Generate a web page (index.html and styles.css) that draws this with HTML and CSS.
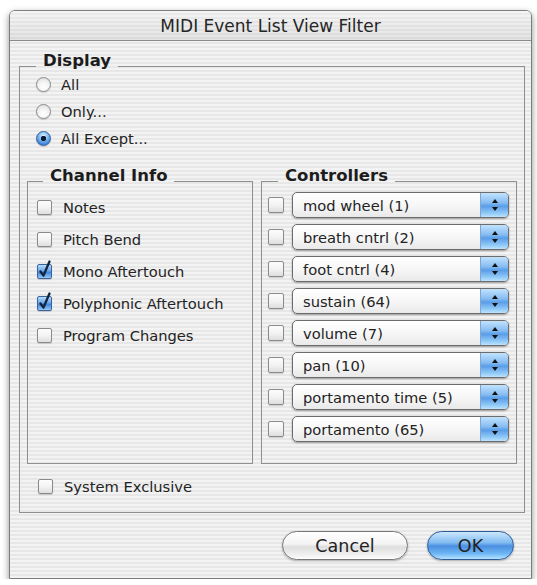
FILE: index.html
```html
<!DOCTYPE html>
<html>
<head>
<meta charset="utf-8">
<title>MIDI Event List View Filter</title>
<link rel="stylesheet" href="styles.css">
</head>
<body>
<div class="window">
  <div class="titlebar">MIDI Event List View Filter</div>
  <div class="content">
    <div class="group display">
      <div class="group-label display-label">Display</div>
      <div class="radios">
        <div class="radio-row"><span class="radio"></span><span>All</span></div>
        <div class="radio-row"><span class="radio"></span><span>Only...</span></div>
        <div class="radio-row"><span class="radio selected"></span><span>All Except...</span></div>
      </div>
      <div class="columns">
        <div class="group channel">
          <div class="group-label channel-label">Channel Info</div>
          <div class="check-list">
            <div class="check-row"><span class="check"></span><span>Notes</span></div>
            <div class="check-row"><span class="check"></span><span>Pitch Bend</span></div>
            <div class="check-row"><span class="check checked"><svg viewBox="0 0 15 15" width="15" height="15"><path d="M3.5 7.5 L6.5 11.5 L12.5 -2.5" fill="none" stroke="#14243d" stroke-width="2.3" stroke-linecap="round" stroke-linejoin="round"/></svg></span><span>Mono Aftertouch</span></div>
            <div class="check-row"><span class="check checked"><svg viewBox="0 0 15 15" width="15" height="15"><path d="M3.5 7.5 L6.5 11.5 L12.5 -2.5" fill="none" stroke="#14243d" stroke-width="2.3" stroke-linecap="round" stroke-linejoin="round"/></svg></span><span>Polyphonic Aftertouch</span></div>
            <div class="check-row"><span class="check"></span><span>Program Changes</span></div>
          </div>
        </div>
        <div class="group controllers">
          <div class="group-label ctrl-label">Controllers</div>
          <div class="ctrl-list">
            <div class="ctrl-row"><span class="check"></span><div class="popup"><span class="popup-text">mod wheel (1)</span><span class="popup-arrows"><span class="up"></span><span class="down"></span></span></div></div>
            <div class="ctrl-row"><span class="check"></span><div class="popup"><span class="popup-text">breath cntrl (2)</span><span class="popup-arrows"><span class="up"></span><span class="down"></span></span></div></div>
            <div class="ctrl-row"><span class="check"></span><div class="popup"><span class="popup-text">foot cntrl (4)</span><span class="popup-arrows"><span class="up"></span><span class="down"></span></span></div></div>
            <div class="ctrl-row"><span class="check"></span><div class="popup"><span class="popup-text">sustain (64)</span><span class="popup-arrows"><span class="up"></span><span class="down"></span></span></div></div>
            <div class="ctrl-row"><span class="check"></span><div class="popup"><span class="popup-text">volume (7)</span><span class="popup-arrows"><span class="up"></span><span class="down"></span></span></div></div>
            <div class="ctrl-row"><span class="check"></span><div class="popup"><span class="popup-text">pan (10)</span><span class="popup-arrows"><span class="up"></span><span class="down"></span></span></div></div>
            <div class="ctrl-row"><span class="check"></span><div class="popup"><span class="popup-text">portamento time (5)</span><span class="popup-arrows"><span class="up"></span><span class="down"></span></span></div></div>
            <div class="ctrl-row"><span class="check"></span><div class="popup"><span class="popup-text">portamento (65)</span><span class="popup-arrows"><span class="up"></span><span class="down"></span></span></div></div>
          </div>
        </div>
      </div>
      <div class="check-row sysex"><span class="check"></span><span>System Exclusive</span></div>
    </div>
    <div class="buttons">
      <button class="btn cancel">Cancel</button>
      <button class="btn ok">OK</button>
    </div>
  </div>
</div>
</body>
</html>
```

FILE: styles.css
```css
* { box-sizing: border-box; }

html, body {
  margin: 0;
  padding: 0;
  background: #ffffff;
}

body {
  font-family: "DejaVu Sans", "Liberation Sans", sans-serif;
  font-size: 14.7px;
  color: #232323;
  overflow: hidden;
}

.window {
  margin: 10px 0 0 9px;
  width: 523px;
  height: 569px;
  border: 1px solid #7d7d7d;
  border-radius: 6px 6px 0 0;
  background: repeating-linear-gradient(to bottom, #f3f3f3 0 2px, #e7e7e7 2px 4px);
  background-attachment: fixed;
  box-shadow: 0 3px 7px rgba(0, 0, 0, 0.45);
  display: flex;
  flex-direction: column;
}

.titlebar {
  height: 30px;
  line-height: 30px;
  text-align: center;
  font-size: 17px;
  color: #262626;
  border-bottom: 1px solid #8a8a8a;
  border-radius: 5px 5px 0 0;
  background:
    linear-gradient(to bottom, rgba(255,255,255,0.35), rgba(190,190,190,0.25)),
    repeating-linear-gradient(to bottom, #f0f0f0 0 2px, #e2e2e2 2px 4px);
}

.content {
  padding: 0 6px 0 9px;
  display: flex;
  flex-direction: column;
}

.group {
  border: 1px solid #8f8f8f;
  display: flex;
  flex-direction: column;
}

.group-label {
  align-self: flex-start;
  margin-top: -15px;
  line-height: 18px;
  height: 18px;
  padding: 0 7px;
  font-weight: bold;
  font-size: 16.5px;
  color: #1c1c1c;
  background: repeating-linear-gradient(to bottom, #f3f3f3 0 2px, #e7e7e7 2px 4px);
  background-attachment: fixed;
}

.display {
  margin-top: 25px;
  padding-bottom: 14px;
}

.display-label { margin-left: 16px; }
.channel-label { margin-left: 15px; }
.ctrl-label { margin-left: 16px; }

.radios {
  margin-top: 1px;
  padding-left: 16px;
}

.radio-row {
  height: 27px;
  display: flex;
  align-items: center;
  gap: 10px;
}

.radio {
  width: 15px;
  height: 15px;
  border-radius: 50%;
  border: 1px solid #8a8a8a;
  background: radial-gradient(circle at 50% 70%, #ffffff 0, #f4f4f4 45%, #d6d6d6 100%);
  box-shadow: 0 1px 1px rgba(0, 0, 0, 0.15);
  flex: none;
}

.radio.selected {
  border-color: #35609f;
  background:
    radial-gradient(circle at 50% 50%, #101c33 0 2.4px, transparent 3px),
    radial-gradient(circle at 50% 30%, #e2f1ff 0, #8cc3f4 35%, #3c82d9 75%, #2c64b4 100%);
}

.columns {
  margin-top: 29px;
  padding: 0 7px;
  display: flex;
  gap: 8px;
}

.channel {
  width: 226px;
  height: 283px;
}

.controllers {
  width: 256px;
  height: 283px;
}

.check-list {
  margin-top: 6px;
  padding-left: 9px;
}

.check-row {
  height: 32px;
  display: flex;
  align-items: center;
  gap: 11px;
}

.check {
  width: 15px;
  height: 15px;
  flex: none;
  border: 1px solid #8a8a8a;
  border-radius: 2px;
  background: linear-gradient(to bottom, #fdfdfd 0, #f3f3f3 50%, #dedede 100%);
  box-shadow: 0 1px 1px rgba(0, 0, 0, 0.15);
}

.check.checked {
  border-color: #3b649f;
  background: linear-gradient(to bottom, #b9dcfa 0, #6aa9ea 45%, #3f82d8 55%, #93c9f7 100%);
}

.check svg {
  display: block;
  overflow: visible;
  margin: -1px 0 0 -1px;
}

.ctrl-list {
  margin-top: 4px;
  padding: 0 7px 0 6px;
}

.ctrl-row {
  height: 32px;
  display: flex;
  align-items: center;
  gap: 8px;
}

.ctrl-row .check {
  width: 16px;
  height: 16px;
}

.popup {
  flex: 1;
  height: 26px;
  border: 1px solid #6c6c6c;
  border-radius: 5px;
  background: linear-gradient(to bottom, #ffffff 0, #f7f7f7 50%, #e9e9e9 100%);
  box-shadow: 0 1px 2px rgba(0, 0, 0, 0.35);
  display: flex;
  align-items: stretch;
  overflow: hidden;
}

.popup-text {
  flex: 1;
  padding-left: 10px;
  display: flex;
  align-items: center;
  white-space: nowrap;
}

.popup-arrows {
  width: 28px;
  flex: none;
  border-left: 1px solid #7ea6d8;
  background: linear-gradient(to bottom, #c3e2fc 0, #86bdf2 40%, #5a9de8 55%, #93cbf8 85%, #bde3ff 100%);
  display: flex;
  flex-direction: column;
  align-items: center;
  justify-content: center;
  gap: 4px;
}

.up, .down {
  width: 0;
  height: 0;
  border-left: 3px solid transparent;
  border-right: 3px solid transparent;
}

.up { border-bottom: 4px solid #111; }
.down { border-top: 4px solid #111; }

.sysex {
  margin-top: 10px;
  height: 24px;
  padding-left: 18px;
}

.buttons {
  margin-top: 18px;
  margin-right: 11px;
  display: flex;
  justify-content: flex-end;
  gap: 19px;
}

.btn {
  height: 29px;
  border-radius: 15px;
  font-family: "DejaVu Sans", "Liberation Sans", sans-serif;
  font-size: 17.5px;
  color: #222;
  border: 1px solid #777;
  padding: 0;
  box-shadow: 0 1px 2px rgba(0, 0, 0, 0.3);
}

.cancel {
  width: 126px;
  background: linear-gradient(to bottom, #ffffff 0, #f3f3f3 45%, #dedede 55%, #f4f4f4 90%, #ffffff 100%);
}

.ok {
  width: 87px;
  border-color: #2d5a98;
  background: linear-gradient(to bottom, #cde7fc 0, #7fbaf1 40%, #4a8fe0 52%, #6eb6f5 80%, #b6e2ff 100%);
}
```
